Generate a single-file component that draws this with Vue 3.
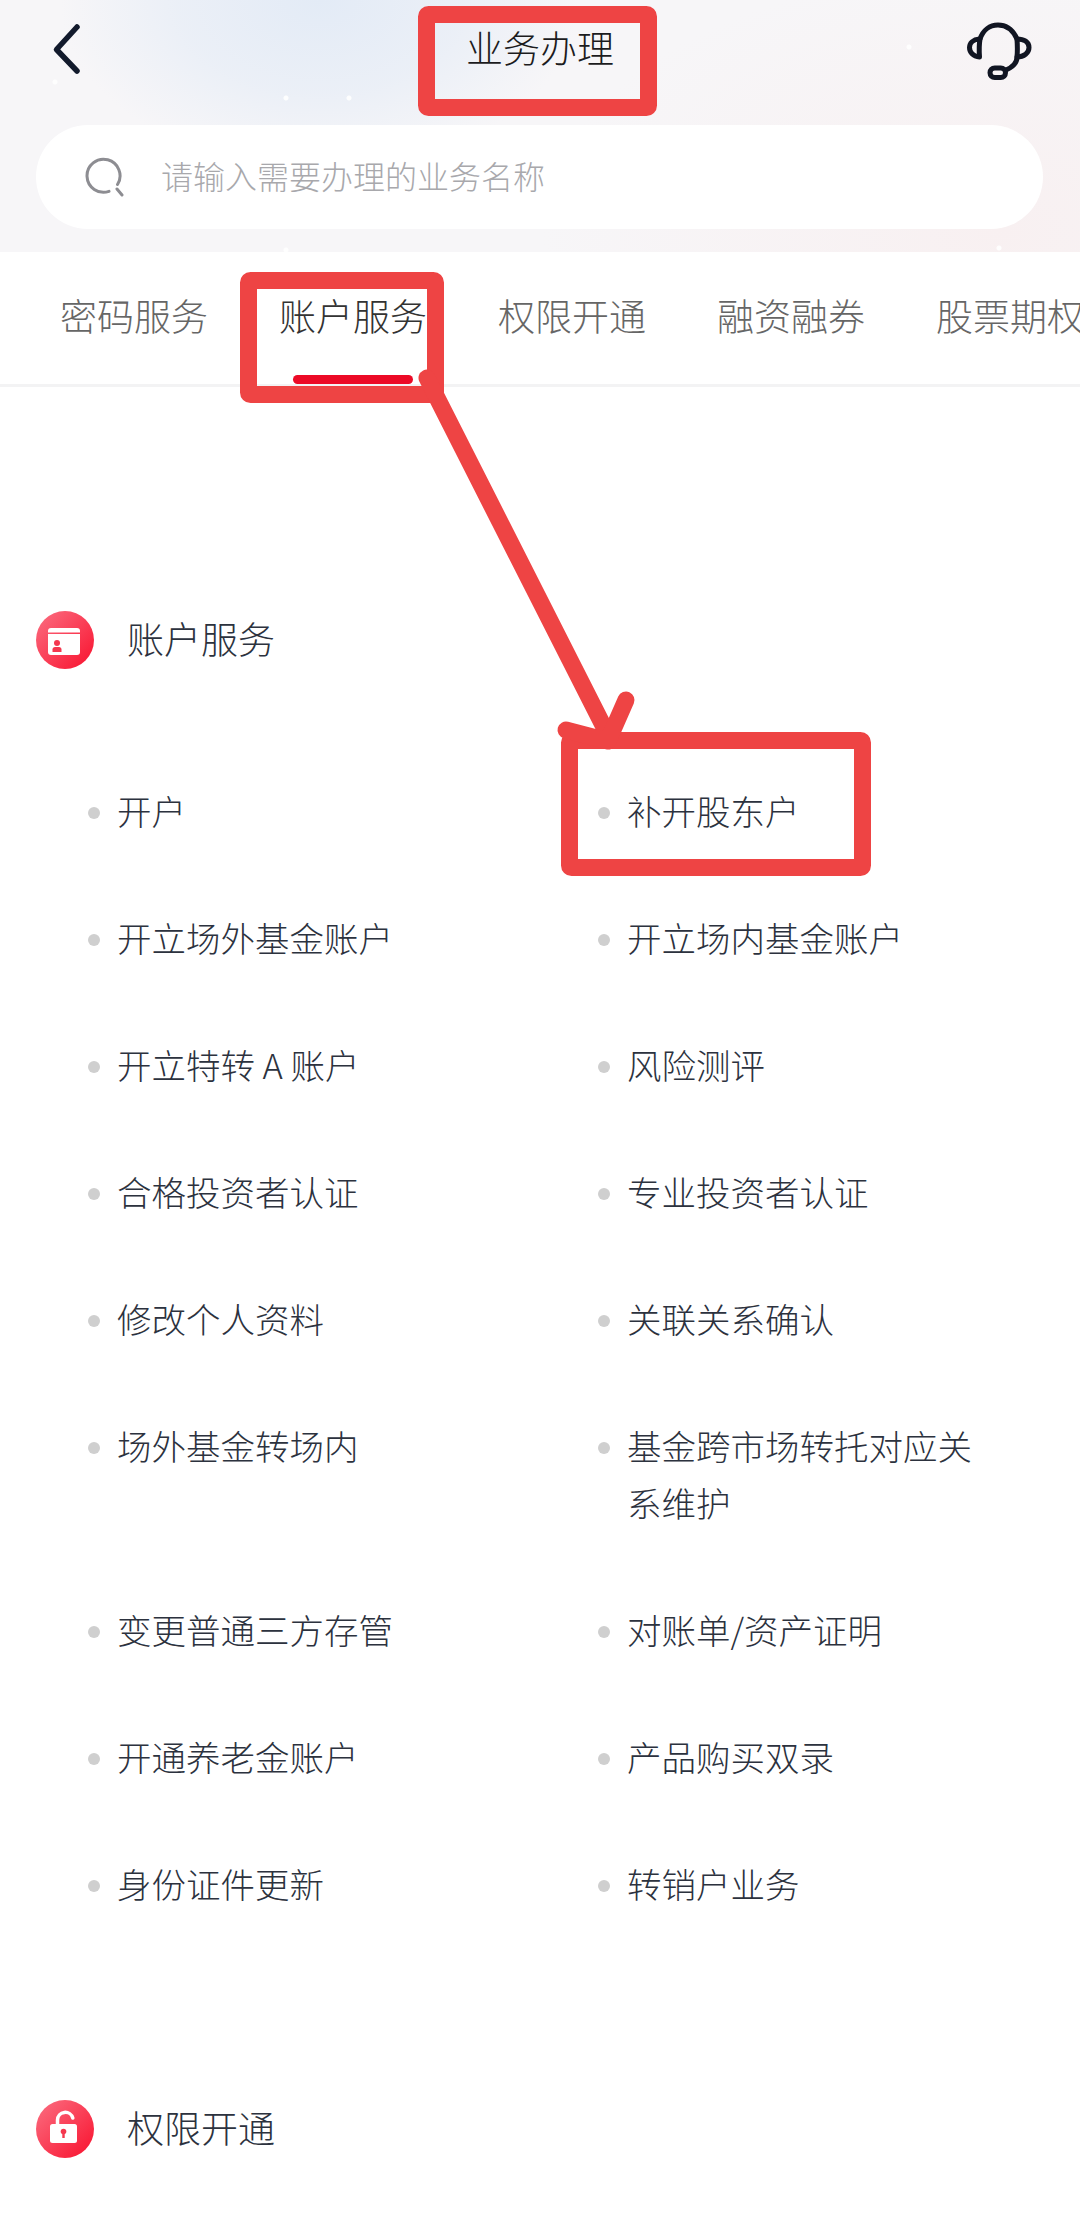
<script setup>
const tabs = ['密码服务', '账户服务', '权限开通', '融资融券', '股票期权']
const rows = [
  ['开户', '补开股东户'],
  ['开立场外基金账户', '开立场内基金账户'],
  ['开立特转 A 账户', '风险测评'],
  ['合格投资者认证', '专业投资者认证'],
  ['修改个人资料', '关联关系确认'],
  ['场外基金转场内', '基金跨市场转托对应关系维护'],
  ['变更普通三方存管', '对账单/资产证明'],
  ['开通养老金账户', '产品购买双录'],
  ['身份证件更新', '转销户业务']
]
const items = rows.flat()
</script>

<template>
  <div class="page">
    <header class="hero">
      <div class="nav">
        <svg class="back" viewBox="0 0 32 56" width="32" height="56">
          <path d="M26 6 L5.500 28.500 L26 50" fill="none" stroke="#121a2c" stroke-width="5.5" stroke-linecap="round" stroke-linejoin="round" />
        </svg>
        <h1 class="title">业务办理</h1>
        <svg class="headset" viewBox="68 22 65 58" width="65" height="58">
          <g fill="none" stroke="#111522" stroke-width="5" stroke-linecap="round" stroke-linejoin="round">
            <path d="M80.5 39C74 39.5 70.5 43 70.5 47.5C70.5 52 74 56.5 80.5 57C80 50 80 45 81 39" />
            <path d="M81 39C84 30 91 25 99 25C107 25 114 30 118 39C118.500 46 118.500 52 118 57C118 62 114 67 107 70" />
            <path d="M118 39C125 39 130 42 130 47.500C130 53 125 57 118 57" />
            <rect x="91" y="68" width="15.500" height="9.500" rx="4.700" />
          </g>
        </svg>
      </div>
      <div class="search">
        <svg class="search-icon" viewBox="0 0 40 40" width="40" height="40">
          <path d="M32.500 27.500A16.500 16.500 0 1 0 24 34.300" fill="none" stroke="#8d8d92" stroke-width="3" stroke-linecap="round" />
          <path d="M32 32L37 38" fill="none" stroke="#8d8d92" stroke-width="3" stroke-linecap="round" />
        </svg>
        <span class="placeholder">请输入需要办理的业务名称</span>
      </div>
    </header>

    <nav class="tabs">
      <div v-for="(tab, i) in tabs" :key="tab" class="tab" :class="{ active: i === 1 }">{{ tab }}</div>
    </nav>

    <main class="content">
      <section class="group">
        <div class="group-head">
          <span class="badge">
            <svg viewBox="0 0 58 58" width="58" height="58">
              <path d="M15 17H41A3 3 0 0 1 44 20V21.500H12V20A3 3 0 0 1 15 17Z" fill="#fff" />
              <path fill-rule="evenodd" fill="#fff" d="M12 23H44V41A3 3 0 0 1 41 44H15A3 3 0 0 1 12 41Z" />
              <circle cx="21" cy="32" r="3" fill="#f4384f" />
              <path d="M16.500 41V38.500C16.500 37 17.500 36 19 36H23C24.500 36 25.500 37 25.500 38.500V41Z" fill="#f4384f" />
            </svg>
          </span>
          <span class="group-name">账户服务</span>
        </div>
        <ul class="grid">
          <li v-for="item in items" :key="item" class="item">
            <i class="dot"></i>
            <span class="item-text">{{ item }}</span>
          </li>
        </ul>
      </section>

      <section class="group second">
        <div class="group-head">
          <span class="badge">
            <svg viewBox="0 0 58 58" width="58" height="58">
              <path d="M21.500 25V20A7.800 7.800 0 0 1 36.800 18" fill="none" stroke="#fff" stroke-width="3.500" stroke-linecap="round" />
              <rect x="14" y="24" width="27" height="19" rx="2.500" fill="#fff" />
              <circle cx="27.500" cy="31.500" r="2.800" fill="#f4384f" />
              <rect x="26.300" y="32" width="2.400" height="6" fill="#f4384f" />
            </svg>
          </span>
          <span class="group-name">权限开通</span>
        </div>
      </section>
    </main>

    <svg class="marks" viewBox="0 0 1080 2228" width="1080" height="2228">
      <g fill="none" stroke="#ee4444" stroke-width="17" stroke-linecap="round" stroke-linejoin="round">
        <rect x="426.500" y="14.500" width="222" height="93" rx="2" />
        <rect x="248.500" y="280.500" width="187" height="114" rx="2" />
        <rect x="569.500" y="740.500" width="293" height="127" rx="2" />
        <path d="M427 378L608 735" />
        <path d="M566 730L608 741L626 700" />
      </g>
    </svg>
  </div>
</template>

<style scoped>
.page {
  position: relative;
  width: 1080px;
  height: 2228px;
  overflow: hidden;
  background: #fff;
  font-family: "Noto Sans CJK SC", "Noto Sans", sans-serif;
  font-weight: 300;
}
.hero {
  height: 252px;
  box-sizing: border-box;
  padding: 0 36px;
  background:
    radial-gradient(circle at 55px 82px, rgba(255,255,255,.9) 0 2px, transparent 3px),
    radial-gradient(circle at 286px 98px, rgba(255,255,255,.9) 0 2px, transparent 3px),
    radial-gradient(circle at 349px 98px, rgba(255,255,255,.9) 0 2px, transparent 3px),
    radial-gradient(circle at 909px 47px, rgba(255,255,255,.9) 0 2px, transparent 3px),
    radial-gradient(circle at 286px 250px, rgba(255,255,255,.9) 0 2px, transparent 3px),
    radial-gradient(circle at 999px 248px, rgba(255,255,255,.9) 0 2px, transparent 3px),
    radial-gradient(ellipse 260px 170px at 320px 0, #e3ebf6 0%, rgba(227,235,246,.6) 55%, rgba(227,235,246,0) 100%),
    radial-gradient(ellipse 460px 260px at 1000px 230px, #f8f0f1 0%, rgba(248,240,241,0) 100%),
    #f7f6f8;
}
.nav {
  height: 125px;
  display: grid;
  grid-template-columns: 1fr auto 1fr;
  padding-bottom: 25px;
  box-sizing: border-box;
  align-items: center;
}
.back { margin-left: 15px; margin-top: -2px; }
.title {
  margin: 0;
  padding-bottom: 6px;
  font-size: 37px;
  font-weight: 300;
  line-height: 94px;
  color: #1c1c1e;
}
.headset { justify-self: end; margin-right: 12px; margin-top: 1px; }
.search {
  height: 104px;
  display: flex;
  align-items: center;
  border-radius: 52px;
  background: #fff;
  width: 1007px;
  box-sizing: border-box;
  padding-left: 49px;
}
.placeholder {
  margin-left: 36px;
  padding-bottom: 5px;
  font-size: 32px;
  color: #a8a8ac;
}
.tabs {
  height: 135px;
  box-sizing: border-box;
  padding-left: 60px;
  display: flex;
  gap: 71px;
  border-bottom: 3px solid #f3f3f4;
  overflow: hidden;
  white-space: nowrap;
}
.tab {
  position: relative;
  flex: none;
  width: 148px;
  font-size: 37px;
  line-height: 126px;
  color: #666;
}
.tab.active { color: #333; }
.tab.active::after {
  content: "";
  position: absolute;
  left: 14px;
  bottom: 0;
  width: 120px;
  height: 9px;
  border-radius: 5px;
  background: #ec0a26;
}
.content { padding-top: 224px; }
.group-head {
  display: flex;
  align-items: center;
  height: 58px;
  padding-left: 36px;
}
.badge {
  width: 58px;
  height: 58px;
  border-radius: 50%;
  background: linear-gradient(135deg, #fb6f82 0%, #f91f3a 85%);
}
.badge svg { display: block; }
.group-name {
  margin-left: 33px;
  padding-bottom: 5px;
  font-size: 37px;
  color: #2c323e;
}
.grid {
  list-style: none;
  margin: 80px 0 0;
  padding: 0 0 0 88px;
  display: grid;
  grid-template-columns: 510px 482px;
}
.item {
  display: flex;
  padding: 33px 0 37px;
  font-size: 34.500px;
  line-height: 57px;
  color: #2c323e;
}
.dot {
  flex: none;
  width: 12px;
  height: 12px;
  margin: 25px 17px 0 0;
  border-radius: 50%;
  background: #cfcfcf;
}
.item-text { width: 350px; }
.second { margin-top: 151px; }
.marks {
  position: absolute;
  left: 0;
  top: 0;
  pointer-events: none;
}
</style>
